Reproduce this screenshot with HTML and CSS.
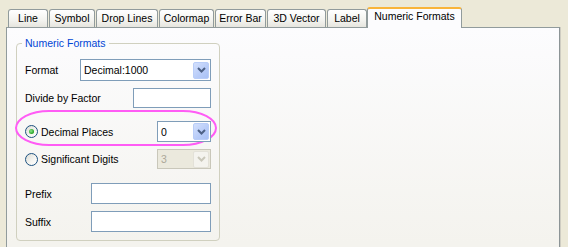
FILE: index.html
```html
<!DOCTYPE html>
<html>
<head>
<meta charset="utf-8">
<link rel="stylesheet" href="styles.css">
</head>
<body>
<div class="tabs">
  <div class="tab t-line">Line</div>
  <div class="tab t-symbol">Symbol</div>
  <div class="tab t-drop">Drop Lines</div>
  <div class="tab t-colormap">Colormap</div>
  <div class="tab t-error">Error Bar</div>
  <div class="tab t-vector">3D Vector</div>
  <div class="tab t-label">Label</div>
  <div class="tab active">Numeric Formats</div>
</div>
<div class="panel">
  <fieldset class="group">
    <legend>Numeric Formats</legend>
    <div class="row r-format">
      <span class="lbl">Format</span>
      <div class="combo w-format"><span class="val">Decimal:1000</span><span class="btn"><svg width="9" height="6" viewBox="0 0 9 6"><path d="M1 1 L4.5 4.5 L8 1" fill="none" stroke="#4d6185" stroke-width="2"/></svg></span></div>
    </div>
    <div class="row r-divide">
      <span class="lbl">Divide by Factor</span>
      <div class="textbox w-divide"></div>
    </div>
    <div class="highlight">
      <div class="row r-decimal">
        <span class="opt"><span class="radio checked"><span class="dot"></span></span><span class="lbl">Decimal Places</span></span>
        <div class="combo w-small"><span class="val">0</span><span class="btn"><svg width="9" height="6" viewBox="0 0 9 6"><path d="M1 1 L4.5 4.5 L8 1" fill="none" stroke="#4d6185" stroke-width="2"/></svg></span></div>
      </div>
    </div>
    <div class="row r-sig">
      <span class="opt"><span class="radio"></span><span class="lbl">Significant Digits</span></span>
      <div class="combo w-small disabled"><span class="val">3</span><span class="btn"><svg width="9" height="6" viewBox="0 0 9 6"><path d="M1 1 L4.5 4.5 L8 1" fill="none" stroke="#c9c7ba" stroke-width="2"/></svg></span></div>
    </div>
    <div class="row r-prefix">
      <span class="lbl">Prefix</span>
      <div class="textbox w-fix"></div>
    </div>
    <div class="row r-suffix">
      <span class="lbl">Suffix</span>
      <div class="textbox w-fix"></div>
    </div>
  </fieldset>
</div>
</body>
</html>
```
FILE: styles.css
```css
* { box-sizing: border-box; }
html, body { margin: 0; padding: 0; }
body {
  background: #ece9d8;
  font-family: "Liberation Sans", Arial, sans-serif;
  font-size: 10.5px;
  color: #000;
  width: 568px;
  height: 247px;
  overflow: hidden;
}
.tabs {
  display: flex;
  align-items: flex-end;
  height: 28px;
  padding-left: 8px;
  padding-top: 7px;
  margin-bottom: -1px;
  position: relative;
  z-index: 1;
}
.tab {
  flex: none;
  height: 18px;
  margin-bottom: 1px;
  margin-right: 1px;
  border: 1px solid #919b9c;
  border-bottom: none;
  border-radius: 3px 3px 0 0;
  background: linear-gradient(#ffffff, #f3f3ef 60%, #e6e5de);
  text-align: center;
  line-height: 17px;
  white-space: nowrap;
}
.t-line { width: 40px; }
.t-symbol { width: 46px; }
.t-drop { width: 62px; }
.t-colormap { width: 55px; }
.t-error { width: 51px; }
.t-vector { width: 59px; }
.t-label { width: 40px; margin-right: 0; }
.tab.active {
  width: 95px;
  height: 21px;
  margin-bottom: 0;
  border-top: 2px solid #f9b43a;
  background: #fcfcfe;
  line-height: 15px;
}
.panel {
  margin-left: 6px;
  width: 554px;
  height: 220px;
  border: 1px solid #919b9c;
  border-bottom: none;
  border-right-color: #8c9496;
  background: linear-gradient(#fcfcfe, #f4f3ee 215px);
  padding-left: 9px;
  box-shadow: 1px 0 0 #cfcdc2;
}
.group {
  margin: 8px 0 0 0;
  width: 204px;
  padding: 0 8px 8px 8px;
  border: 1px solid #d0d0bf;
  border-radius: 4px;
}
.group legend {
  color: #0046d5;
  padding: 0 3px;
  margin-left: -3px;
  line-height: 14px;
}
.row {
  display: flex;
  align-items: center;
  justify-content: space-between;
}
.r-format { margin-top: 9px; height: 22px; }
.r-divide { margin-top: 7px; height: 20px; }
.highlight {
  margin: 2px -6px 0 -10px;
  border: 2px solid #ff5cf5;
  border-radius: 34px / 18px;
  padding: 9px 4px 2px 8px;
}
.r-decimal { height: 21px; }
.r-sig { margin-top: 3px; height: 20px; }
.r-prefix { margin-top: 14px; height: 21px; }
.r-suffix { margin-top: 7px; height: 21px; }
.opt { display: flex; align-items: center; }
.radio {
  width: 13px;
  height: 13px;
  border: 1px solid #1c5180;
  border-radius: 50%;
  background: linear-gradient(135deg, #dcdcd4, #f6f6f3 60%, #ffffff);
  margin-right: 3px;
  display: flex;
  align-items: center;
  justify-content: center;
}
.dot {
  width: 5px;
  height: 5px;
  border-radius: 50%;
  background: radial-gradient(circle at 40% 40%, #8fe58f, #21a121 70%);
}
.combo {
  display: flex;
  align-items: center;
  justify-content: space-between;
  height: 100%;
  border: 1px solid #7f9db9;
  background: #fff;
  padding: 0 1px 0 3px;
}
.w-format { width: 131px; }
.w-small { width: 54px; }
.btn {
  width: 16px;
  height: 17px;
  border-radius: 2px;
  border: 1px solid #b9cdf8;
  background: linear-gradient(135deg, #d3e0fd, #b7cbf8 60%, #a9c1f5);
  display: flex;
  align-items: center;
  justify-content: center;
}
.combo.disabled {
  background: #ebe9dd;
  border-color: #c9c7ba;
}
.combo.disabled .val { color: #aca899; }
.combo.disabled .btn {
  background: #f4f3ee;
  border-color: #e3e1d8;
}
.textbox {
  height: 100%;
  border: 1px solid #7f9db9;
  background: #fff;
}
.w-divide { width: 78px; }
.w-fix { width: 120px; }
```
